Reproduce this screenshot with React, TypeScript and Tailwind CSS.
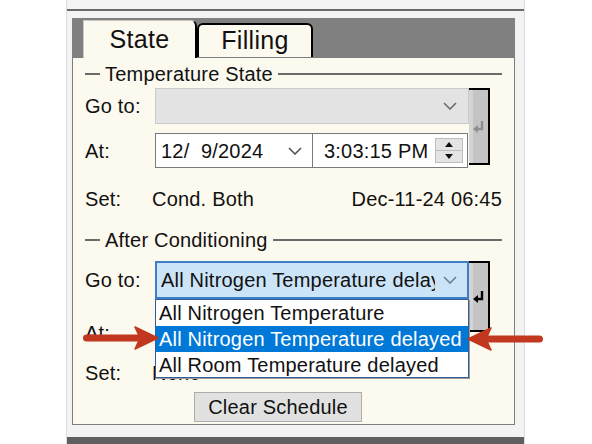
import React from "react";

const Chevron = ({ color = "#6b6b6b" }: { color?: string }) => (
  <svg width="14" height="8" viewBox="0 0 14 8" className="shrink-0">
    <polyline points="1,1 7,7 13,1" fill="none" stroke={color} strokeWidth="1.6" />
  </svg>
);

const EnterGlyph = ({ color }: { color: string }) => (
  <svg width="12" height="14" viewBox="0 0 12 14">
    <path d="M9 1 V9 H4" fill="none" stroke={color} strokeWidth="2.4" />
    <polygon points="0,9 5,5 5,13" fill={color} />
  </svg>
);

const Arrow = ({ flip }: { flip?: boolean }) => (
  <svg width="76" height="24" viewBox="0 0 76 24" className={flip ? "-scale-x-100" : ""}>
    <rect x="0" y="8.5" width="58" height="7" rx="3.5" fill="#c2381f" />
    <polygon points="52,1 75,12 52,23 57,12" fill="#c2381f" stroke="#c2381f" strokeWidth="1.5" strokeLinejoin="round" />
  </svg>
);

const Legend = ({ text }: { text: string }) => (
  <div className="flex items-center h-[22px]">
    <span className="w-[15px] h-[2px] bg-[#6b6b6b]" />
    <span className="px-[5px] leading-none">{text}</span>
    <span className="flex-1 h-[2px] bg-[#6b6b6b]" />
  </div>
);

const EnterButton = ({ h, active }: { h: string; active?: boolean }) => (
  <div className={`${h} w-[21px] flex items-center justify-center bg-[#c4c4c4] border-t-2 border-r-2 border-b-2 border-black shadow-[inset_4px_0_0_#d4d4d4]`}>
    <EnterGlyph color={active ? "#000" : "#8f8f8f"} />
  </div>
);

const DateTimeRow = ({ mt }: { mt: string }) => (
  <div className={`${mt} flex h-[35px]`}>
    <div className="w-[158px] flex items-center justify-between pl-[5px] pr-[10px] bg-white border border-[#7a7a7a]">
      <span>12/&nbsp; 9/2024</span>
      <Chevron color="#555" />
    </div>
    <div className="w-[155px] flex items-center justify-between pl-[11px] pr-[4px] bg-white border border-l-0 border-[#7a7a7a]">
      <span>3:03:15 PM</span>
      <div className="w-[28px] h-[25px] flex flex-col bg-[#e4e4e4] border border-[#bdbdbd]">
        <div className="flex-1 flex items-center justify-center border-b border-[#bdbdbd]">
          <svg width="8" height="5" viewBox="0 0 8 5"><polygon points="0,5 4,0 8,5" fill="#111" /></svg>
        </div>
        <div className="flex-1 flex items-center justify-center">
          <svg width="8" height="5" viewBox="0 0 8 5"><polygon points="0,0 4,5 8,0" fill="#111" /></svg>
        </div>
      </div>
    </div>
  </div>
);

export default function App() {
  return (
    <div className="w-[592px] h-[444px] bg-white overflow-hidden text-[20px] tracking-[0.2px] text-[#111] font-['Liberation_Sans',Arial,sans-serif]">
      <div className="ml-[66px] w-[459px] h-full flex flex-col bg-[#f3f3f3] border-x border-[#dcdcdc]">
        <div className="mt-[9px] h-[2px] bg-[#6a6a6a]" />

        <div className="mt-[7px] ml-[5px] w-[443px] flex flex-col">
          {/* tabs */}
          <div className="h-[39px] bg-[#808080] flex items-end pl-[11px]">
            <div className="relative z-10 h-[38px] mb-[-1px] w-[114px] flex items-center justify-center bg-[#fcf9ef] border-l border-t border-[#c9c9c9] border-r-2 border-r-black rounded-tr-[6px] text-[25px] tracking-[0.3px]">
              State
            </div>
            <div className="h-[34px] w-[116px] flex items-center justify-center bg-[#fcf9ef] border-t-2 border-x-2 border-black rounded-t-[6px] text-[25px] tracking-[0.3px]">
              Filling
            </div>
          </div>

          {/* panel */}
          <div className="relative h-[368px] bg-[#fcf9ef] border border-[#7d7d7d] px-[12px] pt-[5px]">
            <Legend text="Temperature State" />

            <div className="mt-[3px] flex">
              <div className="w-[70px] flex flex-col">
                <div className="h-[36px] flex items-center">Go to:</div>
                <div className="mt-[9px] h-[35px] flex items-center">At:</div>
              </div>
              <div className="w-[314px] flex flex-col">
                <div className="h-[36px] flex items-center justify-end pr-[11px] bg-[#e3e3e3] border border-[#cacaca]">
                  <Chevron />
                </div>
                <DateTimeRow mt="mt-[9px]" />
              </div>
              <EnterButton h="h-[77px]" />
            </div>

            <div className="mt-[19px] h-[24px] flex items-center">
              <span className="w-[67px]">Set:</span>
              <span>Cond. Both</span>
              <span className="ml-auto">Dec-11-24 06:45</span>
            </div>

            <div className="mt-[18px]">
              <Legend text="After Conditioning" />
            </div>

            <div className="mt-[10px] flex">
              <div className="w-[70px] flex flex-col">
                <div className="h-[38px] flex items-center">Go to:</div>
                <div className="mt-[16px] h-[35px] flex items-center">At:</div>
              </div>
              <div className="relative w-[314px] flex flex-col">
                <div className="h-[38px] flex items-center bg-[#cce4f7] border-2 border-[#3d7ec4] pl-[4px] pr-[10px]">
                  <span className="flex-1 overflow-hidden whitespace-nowrap">All Nitrogen Temperature delayed</span>
                  <span className="ml-[8px]"><Chevron color="#6b7f93" /></span>
                </div>
                <div className="mt-[16px] h-[35px]" />
                <div className="absolute z-10 top-[38px] left-0 w-[314px] h-[79px] flex flex-col bg-white border border-[#2f5f98] shadow-[1px_1px_0_#9a9a9a]">
                  <div className="h-[26px] flex items-center pl-[3px] whitespace-nowrap">All Nitrogen Temperature</div>
                  <div className="h-[26px] flex items-center pl-[3px] whitespace-nowrap bg-[#0078d7] text-white">All Nitrogen Temperature delayed</div>
                  <div className="h-[25px] flex items-center pl-[3px] whitespace-nowrap">All Room Temperature delayed</div>
                </div>
              </div>
              <EnterButton h="h-[71px]" active />
            </div>

            <div className="mt-[11px] h-[24px] flex items-center">
              <span className="w-[67px]">Set:</span>
              <span>None</span>
            </div>

            <button className="mt-[7px] ml-[109px] w-[168px] h-[30px] flex items-center justify-center bg-[#e1e1e1] border border-[#adadad]">
              Clear Schedule
            </button>

            <div className="absolute z-20 left-[10px] top-[268px]">
              <Arrow />
            </div>
            <div className="absolute z-20 left-[394px] top-[269px]">
              <Arrow flip />
            </div>
          </div>
        </div>

        <div className="mt-auto h-[7px] bg-[#5f5f5f]" />
      </div>
    </div>
  );
}
